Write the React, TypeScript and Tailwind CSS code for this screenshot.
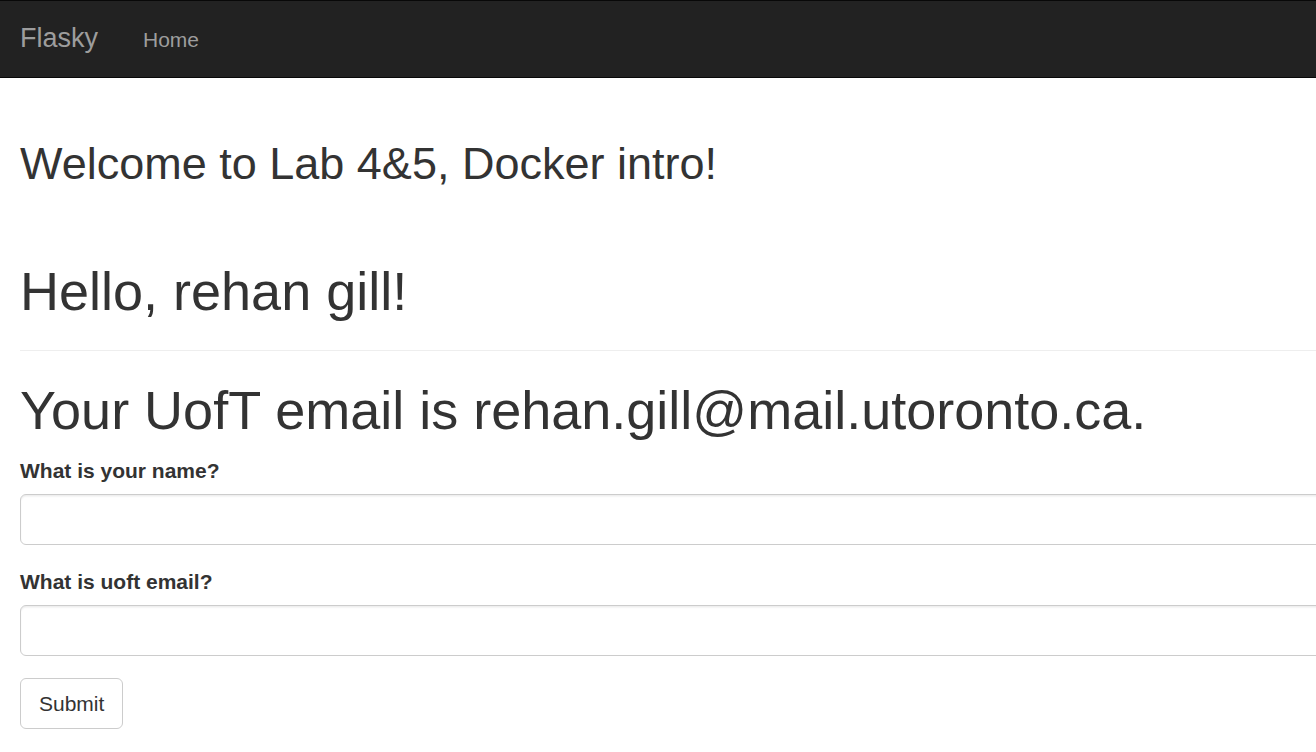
export default function App() {
  return (
    <div className="w-[1316px] h-[752px] overflow-hidden bg-white text-[#333] font-['Liberation_Sans',Arial,sans-serif]">
      <nav className="w-[1316px] h-[78px] bg-[#222] border-t border-b border-[#080808] flex items-start">
        <a className="block pl-[20px] pr-[22.5px] pt-[21.5px] text-[27px] leading-[30px] text-[#9d9d9d]">
          Flasky
        </a>
        <a className="block px-[22.5px] pt-[23.5px] text-[21px] leading-[30px] text-[#9d9d9d]">
          Home
        </a>
      </nav>

      <div className="w-[1755px] px-[20px]">
        <h2 className="mt-[61px] text-[45px] leading-[49.5px] font-normal">
          Welcome to Lab 4&amp;5, Docker intro!
        </h2>

        <div className="mt-[73.5px] pb-[28.6px] border-b border-[#eee]">
          <h1 className="text-[54px] leading-[59.4px] font-normal">Hello, rehan gill!</h1>
        </div>

        <h1 className="mt-[30px] text-[54px] leading-[59.4px] font-normal">
          Your UofT email is rehan.gill@mail.utoronto.ca.
        </h1>

        <form className="mt-[16px]">
          <div>
            <label className="block text-[21px] leading-[30px] font-bold mb-[7.5px]">
              What is your name?
            </label>
            <input
              type="text"
              className="block w-full h-[51px] px-[18px] border border-[#ccc] rounded-[6px] shadow-[inset_0_1.5px_1.5px_rgba(0,0,0,0.075)] outline-none"
            />
          </div>
          <div className="mt-[22.5px]">
            <label className="block text-[21px] leading-[30px] font-bold mb-[7.5px]">
              What is uoft email?
            </label>
            <input
              type="text"
              className="block w-full h-[51px] px-[18px] border border-[#ccc] rounded-[6px] shadow-[inset_0_1.5px_1.5px_rgba(0,0,0,0.075)] outline-none"
            />
          </div>
          <button
            type="button"
            className="mt-[22.5px] h-[51px] px-[18px] bg-white border border-[#ccc] rounded-[6px] text-[21px] leading-[30px] text-[#333]"
          >
            Submit
          </button>
        </form>
      </div>
    </div>
  );
}
